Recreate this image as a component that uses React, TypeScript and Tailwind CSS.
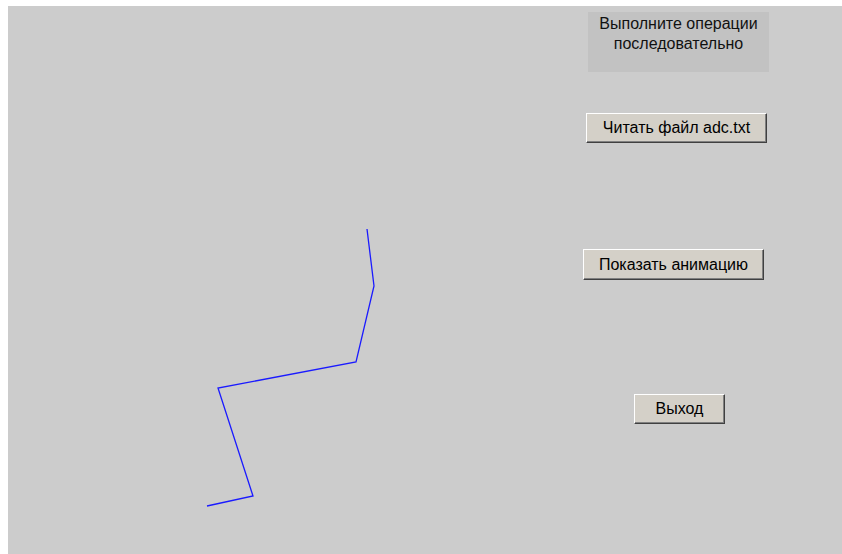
import React from "react";

// Path of the measured signal, in panel coordinates
const points: [number, number][] = [
  [359, 223],
  [366, 280],
  [348, 356],
  [210, 382],
  [245, 490],
  [199, 500],
];

function ClassicButton({ label, className }: { label: string; className: string }) {
  return (
    <button
      className={`flex items-center justify-center bg-[#d4d0c8] text-black border border-t-white border-l-white border-b-[#404040] border-r-[#404040] shadow-[inset_-1px_-1px_0_#808080] text-[16px] leading-none ${className}`}
    >
      {label}
    </button>
  );
}

export default function App() {
  const d = points.map(([x, y], i) => `${i === 0 ? "M" : "L"}${x} ${y}`).join(" ");
  return (
    <div
      className="w-[842px] h-[554px] bg-white pt-[6px] pl-[8px] overflow-hidden"
      style={{ fontFamily: '"Liberation Sans", Arial, sans-serif' }}
    >
      <div className="flex h-full w-full bg-[#cccccc]">
        <svg width={575} height={548} className="shrink-0" viewBox="0 0 575 548">
          <path d={d} fill="none" stroke="#1a1aff" strokeWidth={1.3} strokeLinejoin="miter" />
        </svg>
        <div className="flex flex-col items-start pt-[6px]">
          <div className="ml-[5px] w-[181px] h-[60px] bg-[#c2c2c2] pt-[2px] text-center text-[16px] leading-[20px] text-[#111]">
            Выполните операции
            <br />
            последовательно
          </div>
          <ClassicButton label="Читать файл adc.txt" className="ml-[3px] mt-[41px] w-[181px] h-[30px]" />
          <ClassicButton label="Показать анимацию" className="mt-[106px] w-[181px] h-[31px]" />
          <ClassicButton label="Выход" className="ml-[51px] mt-[114px] w-[91px] h-[30px]" />
        </div>
      </div>
    </div>
  );
}
